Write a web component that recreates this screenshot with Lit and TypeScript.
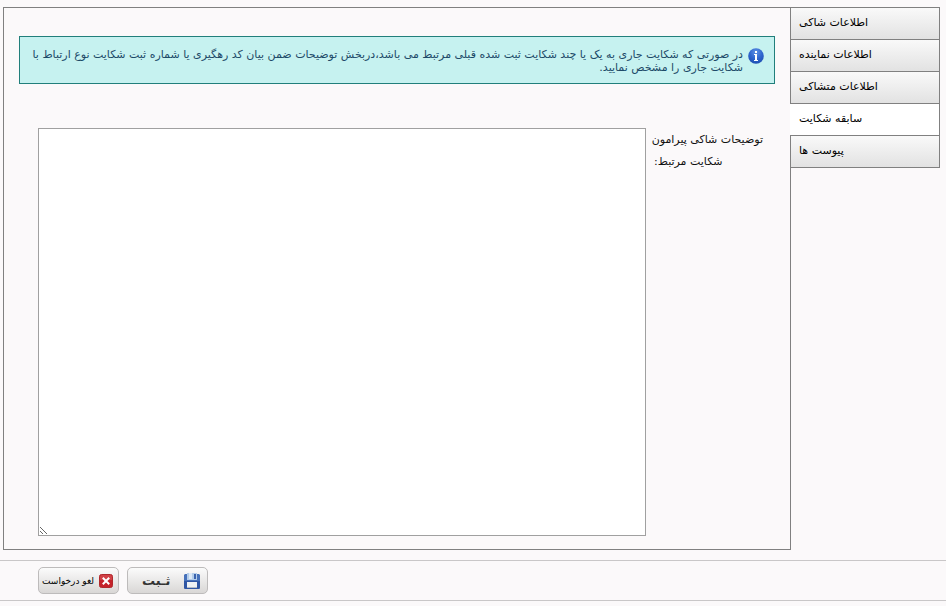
import { LitElement, html, css } from "lit";
import { customElement, state } from "lit/decorators.js";
import { classMap } from "lit/directives/class-map.js";

const TABS = ["اطلاعات شاکی", "اطلاعات نماینده", "اطلاعات متشاکی", "سابقه شکایت", "پیوست ها"];

const infoIcon = html`<svg class="info-icon" viewBox="0 0 16 16" aria-hidden="true">
  <defs>
    <radialGradient id="ball" cx="0.5" cy="0.25" r="0.8">
      <stop offset="0" stop-color="#5f92e4" />
      <stop offset="0.5" stop-color="#2f66cf" />
      <stop offset="1" stop-color="#1c4cae" />
    </radialGradient>
  </defs>
  <circle cx="8" cy="8" r="7.8" fill="url(#ball)" />
  <path d="M7 3h2v2H7zM6 6h3v6h1v1H6v-1h1V7H6z" fill="#fff" />
</svg>`;

const saveIcon = html`<svg class="icon" viewBox="0 0 16 16" aria-hidden="true">
  <path d="M1 1h14l1 1v13l-1 1H1l-1-1V2z" fill="#4671ba" />
  <path d="M0 8h16v7l-1 1H1l-1-1z" fill="#2f56a4" />
  <path d="M3 0h10v7H3z" fill="#b4cdea" />
  <path d="M5 0h3v6H5z" fill="#dce9f7" />
  <path d="M10 1h2v5h-2z" fill="#3a63ae" />
  <path d="M3 9h10v6H3z" fill="#eef1f4" />
  <path d="M3 14h10v1H3z" fill="#b4bcc6" />
</svg>`;

const closeIcon = html`<svg class="close-icon" viewBox="0 0 14 14" aria-hidden="true">
  <rect x="0.5" y="0.5" width="13" height="13" rx="2" fill="#c5222a" stroke="#b0282c" />
  <path d="M1 3a2 2 0 0 1 2-2h8a2 2 0 0 1 2 2v3H1z" fill="#d04046" />
  <path d="M4.500 4.500l5 5M9.500 4.500l-5 5" stroke="#fff" stroke-width="2" stroke-linecap="square" />
</svg>`;

@customElement("app-root")
export class AppRoot extends LitElement {
  @state() private active = 3;

  static styles = css`
    :host {
      display: block;
      box-sizing: border-box;
      min-height: 100vh;
      padding-top: 7px;
      background: #fbf9fa;
      color: #111;
      font-family: "DejaVu Sans", "Noto Sans", sans-serif;
      font-size: 11px;
    }
    * {
      box-sizing: border-box;
    }
    .main {
      display: flex;
      align-items: flex-start;
      padding: 0 6px 0 3px;
    }
    .panel {
      flex: 1;
      min-width: 0;
      border: 1px solid #808080;
      padding: 28px 15px 13px;
    }
    .info {
      display: flex;
      gap: 5px;
      min-height: 48px;
      padding: 11px 10px 8px;
      border: 1px solid #217f7b;
      background: #c6f2f0;
      color: #1d4a68;
      line-height: 13px;
    }
    .info p {
      flex: 1;
      margin: 0;
    }
    .info-icon {
      flex: none;
      width: 16px;
      height: 16px;
    }
    .field {
      display: flex;
      gap: 8px;
      margin: 44px 12px 0 19px;
    }
    .field label {
      width: 109px;
      padding-top: 1px;
      text-align: left;
      white-space: nowrap;
      line-height: 22px;
    }
    .field label span {
      display: block;
    }
    textarea {
      flex: 1;
      min-width: 0;
      height: 408px;
      margin: 0;
      border: 1px solid #a0a0a0;
      border-radius: 0;
      background: #fff;
      font: inherit;
      outline: none;
      resize: both;
    }
    .tabs {
      position: relative;
      z-index: 1;
      width: 150px;
      margin-inline-end: -1px;
      border: 1px solid #808080;
      border-left: 0;
    }
    .tab {
      display: block;
      width: 100%;
      height: 32px;
      padding: 0 9px 2px;
      border: 0;
      border-bottom: 1px solid #808080;
      background: linear-gradient(#f9f9f9, #e2e2e2);
      box-shadow: inset 1px 0 #808080;
      color: #000;
      font: inherit;
      text-align: left;
      cursor: pointer;
    }
    .tab:last-child {
      height: 31px;
      border-bottom: 0;
    }
    .tab.active {
      background: #fff;
      box-shadow: none;
    }
    .actions {
      display: flex;
      justify-content: flex-end;
      gap: 8px;
      margin-top: 10px;
      padding: 6px 38px;
      border: solid #c9c7c8;
      border-width: 1px 0;
    }
    .button {
      display: flex;
      align-items: center;
      justify-content: space-between;
      width: 81px;
      height: 27px;
      padding: 0 7px;
      border: 1px solid #bdbbbb;
      border-radius: 5px;
      background: linear-gradient(#fbfbfb, #d9d7d6);
      color: #333;
      font: inherit;
      white-space: nowrap;
      cursor: pointer;
    }
    .save {
      padding-left: 14px;
      font-size: 13px;
      font-weight: bold;
    }
    .cancel {
      padding: 0 5px 0 3px;
      font-size: 9px;
      color: #000;
    }
    .icon {
      width: 16px;
      height: 16px;
    }
    .close-icon {
      width: 14px;
      height: 14px;
    }
  `;

  render() {
    return html`
      <div class="main" dir="rtl">
        <nav class="tabs" role="tablist">
          ${TABS.map(
            (name, i) => html`<button
              type="button"
              role="tab"
              aria-selected=${i === this.active ? "true" : "false"}
              class=${classMap({ tab: true, active: i === this.active })}
              @click=${() => (this.active = i)}
            >${name}</button>`
          )}
        </nav>
        <section class="panel">
          <div class="info">
            ${infoIcon}
            <p>در صورتی که شکایت جاری به یک یا چند شکایت ثبت شده قبلی مرتبط می باشد،دربخش توضیحات ضمن بیان کد رهگیری یا شماره ثبت شکایت نوع ارتباط با شکایت جاری را مشخص نمایید.</p>
          </div>
          <div class="field">
            <label for="notes"><span>توضیحات شاکی پیرامون</span><span>شکایت مرتبط:</span></label>
            <textarea id="notes"></textarea>
          </div>
        </section>
      </div>
      <div class="actions" dir="rtl">
        <button type="button" class="button save">${saveIcon}<span>ثـبت</span></button>
        <button type="button" class="button cancel">${closeIcon}<span>لغو درخواست</span></button>
      </div>
    `;
  }
}
